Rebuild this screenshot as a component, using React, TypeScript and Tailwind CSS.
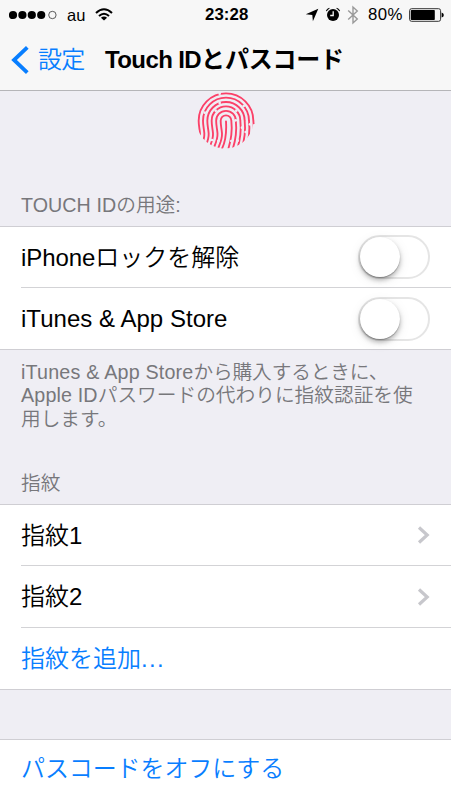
import type { ReactNode } from 'react';

const BASE = "font-['Liberation_Sans','Noto_Sans_CJK_JP',sans-serif]";

function StatusBar() {
  return (
    <div className="flex h-[29px] items-center pl-[9px] pr-[7px] text-black">
      <svg width="49" height="10" viewBox="0 0 49 10">
        {[4, 13.4, 22.8, 32.2].map((x) => (
          <circle key={x} cx={x} cy="5" r="4.1" />
        ))}
        <circle cx="43.4" cy="5" r="3.7" fill="none" stroke="#333" strokeWidth="0.8" />
      </svg>
      <span className="ml-[9px] w-[20px] pt-[2px] text-[16.5px] leading-none">au</span>
      <svg className="ml-2 mb-px" width="18" height="13" viewBox="0 0 18 13">
        <g fill="none" stroke="#000" strokeWidth="2">
          <path d="M1 4.9 Q9 -2.4 17 4.9" />
          <path d="M4 8 Q9 3.4 14 8" />
        </g>
        <path d="M9 12.6 L5.9 9.7 Q9 7.2 12.1 9.7 Z" />
      </svg>
      <span className="ml-[92px] w-[45px] pt-[2px] text-[16.8px] font-bold leading-none tracking-[0.1px]">23:28</span>
      <svg className="ml-[55px]" width="14" height="14" viewBox="0 0 14 14">
        <path d="M13.3 0.8 L7.9 13.3 L7.3 6.9 L0.8 6.3 Z" />
      </svg>
      <svg className="ml-[6px]" width="16" height="15" viewBox="0 0 16 15">
        <circle cx="8" cy="8" r="6" />
        <path d="M1.4 4.1 Q2 1.9 4.4 1.2 M11.6 1.2 Q14 1.9 14.6 4.1" fill="none" stroke="#000" strokeWidth="1.1" />
        <path d="M8.2 4.2 V8.5 H5.2" fill="none" stroke="#f7f7f7" strokeWidth="1.3" />
      </svg>
      <svg className="ml-[6px]" width="12" height="20" viewBox="0 0 12 20">
        <path d="M1.2 5.5 L10.3 14 L6 18 V2 L10.3 6 L1.2 14.5" fill="none" stroke="#999" strokeWidth="1.4" />
      </svg>
      <span className="ml-[9px] w-[36px] whitespace-nowrap pt-[2px] text-[16.8px] leading-none tracking-[0.4px]">80%</span>
      <svg className="ml-[5px]" width="35" height="14" viewBox="0 0 35 14">
        <rect x="0.6" y="0.7" width="31" height="12.6" rx="2" fill="none" stroke="#333" strokeWidth="1" />
        <rect x="1.8" y="1.9" width="24" height="10.2" rx="0.8" />
        <path d="M32.6 4.5 Q34.8 5 34.8 7 T32.6 9.5 Z" />
      </svg>
    </div>
  );
}

function NavBar() {
  return (
    <div className="flex h-[61px] items-center pl-[11px] text-[24px] leading-[30px]">
      <svg width="18" height="28" viewBox="0 0 18 28">
        <path d="M16.3 1.4 L3 14 L16.3 26.6" fill="none" stroke="#087eff" strokeWidth="3.8" />
      </svg>
      <span className="ml-[9px] w-[48px] whitespace-nowrap font-[350] tracking-[-0.8px] text-[#087eff]">設定</span>
      <h1 className="ml-[19px] whitespace-nowrap font-bold">
        <span className="tracking-[-0.6px]">Touch ID</span>
        <span className="tracking-[-0.2px]">とパスコード</span>
      </h1>
    </div>
  );
}

const RIDGES = [82, 69, 56, 43, 29.5, 16];

const GAPS = [
  [101, 41], [173, 78], [101, 69], [192, 133], [179, 156], [151, 92], [168, 143], [89, 92],
  [149, 121], [78, 180], [155, 182], [97, 183], [136, 183], [56, 98],
];

function Fingerprint() {
  return (
    <svg className="ml-px" width="58" height="58" viewBox="33 33 174 174" fill="none">
      <clipPath id="pad">
        <path d="M120 34 A87 87 0 0 1 208 132 H202 A86 86 0 1 1 120 34" />
      </clipPath>
      <g clipPath="url(#pad)">
        <g stroke="#fb4168" strokeWidth="5.6">
          {RIDGES.map((r) => (
            <path
              key={r}
              d={`M${120 - r - 8} 206 C${120 - r - 2} 190 ${120 - r + 5} 178 ${120 - r + 4} 160 C${120 - r + 3} 146 ${120 - r} 138 ${120 - r} 122 A${r} ${r} 0 0 1 ${120 + r} 122 C${120 + r + 3} 150 ${120 + r} 178 ${120 + r - 9} 206`}
            />
          ))}
          <path d="M108 206 C119 184 122 157 120 124" strokeLinecap="round" />
        </g>
        {GAPS.map(([x, y]) => (
          <circle key={`${x}-${y}`} cx={x} cy={y} r="4" fill="#efeef4" />
        ))}
      </g>
    </svg>
  );
}

function Toggle() {
  return (
    <button
      role="switch"
      aria-checked="false"
      className="flex h-[44px] w-[72px] shrink-0 rounded-full border-2 border-[#e5e5e5] bg-white"
    >
      <span className="block size-[40px] rounded-full bg-white shadow-[0_3px_5px_rgba(0,0,0,0.28),0_1px_1px_rgba(0,0,0,0.25),0_3px_13px_rgba(0,0,0,0.08)]" />
    </button>
  );
}

function Chevron() {
  return (
    <svg width="13" height="18" viewBox="0 0 13 18" className="shrink-0">
      <path d="M2 1.5 L10.2 9 L2 16.5" fill="none" stroke="#c7c7cc" strokeWidth="3.2" />
    </svg>
  );
}

function Row({ children, side, tall, last }: { children: ReactNode; side?: ReactNode; tall?: boolean; last?: boolean }) {
  return (
    <div className={`pl-[21px] ${tall ? 'h-[62px]' : 'h-[61px]'}`}>
      <div className={`flex h-full items-center justify-between pr-[21px] ${last ? '' : 'border-b border-[#d3d3d6]'}`}>
        <span className="whitespace-nowrap pt-px text-[24px] leading-[30px]">{children}</span>
        {side}
      </div>
    </div>
  );
}

export default function App() {
  return (
    <div className={`${BASE} flex h-[800px] w-[451px] flex-col overflow-hidden bg-[#efeef4] text-black`} lang="ja">
      <header className="h-[91px] shrink-0 border-b border-[#b5b5b8] bg-[#f7f7f7]">
        <StatusBar />
        <NavBar />
      </header>

      <div className="flex h-[58px] shrink-0 justify-center">
        <Fingerprint />
      </div>

      <h2 className="mt-[44px] h-[33px] shrink-0 pl-[21px] text-[19.7px] font-[350] leading-[24px] text-[#77777b]">
        <span className="tracking-[0.05px]">TOUCH ID</span>
        <span>の用途:</span>
      </h2>
      <section className="shrink-0 border-y border-[#cfced3] bg-white">
        <Row side={<Toggle />}>
          <span className="tracking-[-0.1px]">iPhone</span>
          <span className="font-[350]">ロックを解除</span>
        </Row>
        <Row side={<Toggle />} last>
          <span className="tracking-[0.03px]">iTunes &amp; App Store</span>
        </Row>
      </section>

      <p className="mt-[11px] h-[70px] shrink-0 whitespace-nowrap pl-[21px] text-[19.7px] font-[350] leading-[23.3px] text-[#77777b]">
        <span className="tracking-[0.2px]">iTunes &amp; App Store</span>
        <span className="tracking-[-0.15px]">から購入するときに、</span>
        <br />
        <span className="tracking-[0.15px]">Apple ID</span>パスワードの代わりに指紋認証を使
        <br />
        用します。
      </p>

      <h2 className="mt-[40px] h-[33px] shrink-0 pl-[21px] text-[19.7px] font-[350] leading-[24px] text-[#77777b]">指紋</h2>
      <section className="shrink-0 border-y border-[#cfced3] bg-white">
        <Row side={<Chevron />}>
          <span className="font-[350]">指紋</span>1
        </Row>
        <Row side={<Chevron />} tall>
          <span className="font-[350]">指紋</span>2
        </Row>
        <Row last>
          <span className="font-[350] text-[#087eff]">
            指紋を追加<span className="tracking-[1.3px]">...</span>
          </span>
        </Row>
      </section>

      <section className="mt-[49px] h-[61px] shrink-0 border-t border-[#cfced3] bg-white">
        <div className="pl-[21px] pt-[14px] text-[24px] font-[350] leading-[30px] tracking-[-0.1px] text-[#087eff]">
          パスコードをオフにする
        </div>
      </section>
    </div>
  );
}
